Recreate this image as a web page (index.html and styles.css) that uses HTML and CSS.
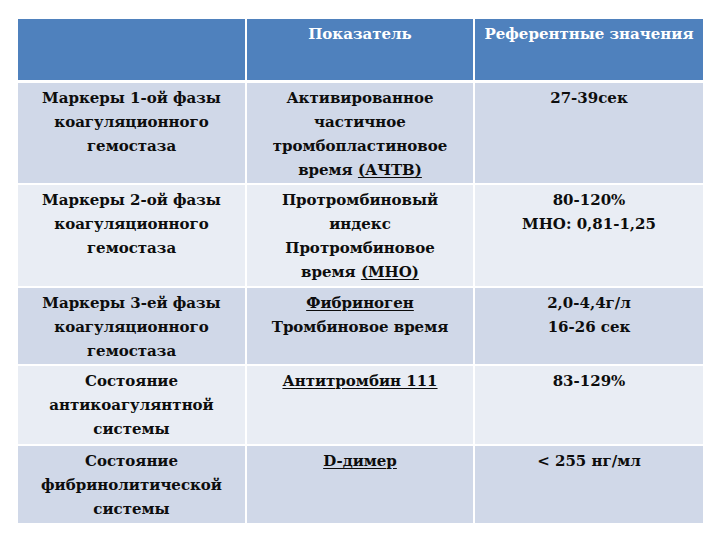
FILE: index.html
```html
<!DOCTYPE html>
<html lang="ru">
<head>
<meta charset="utf-8">
<link rel="stylesheet" href="styles.css">
</head>
<body>
<table class="grid">
  <colgroup><col class="c1"><col class="c2"><col class="c3"></colgroup>
  <tr class="head"><th></th><th>Показатель</th><th>Референтные значения</th></tr>
  <tr class="odd r1"><td>Маркеры 1-ой фазы<br>коагуляционного<br>гемостаза</td><td>Активированное<br>частичное<br>тромбопластиновое<br>время <u>(АЧТВ)</u></td><td>27-39сек</td></tr>
  <tr class="even r2"><td>Маркеры 2-ой фазы<br>коагуляционного<br>гемостаза</td><td>Протромбиновый<br>индекс<br>Протромбиновое<br>время <u>(МНО)</u></td><td>80-120%<br>МНО: 0,81-1,25</td></tr>
  <tr class="odd r3"><td>Маркеры 3-ей фазы<br>коагуляционного<br>гемостаза</td><td><u>Фибриноген</u><br>Тромбиновое время</td><td>2,0-4,4г/л<br>16-26 сек</td></tr>
  <tr class="even r4"><td>Состояние<br>антикоагулянтной<br>системы</td><td><u>Антитромбин 111</u></td><td>83-129%</td></tr>
  <tr class="odd r5"><td>Состояние<br>фибринолитической<br>системы</td><td><u>D-димер</u></td><td>&lt; 255 нг/мл</td></tr>
</table>
</body>
</html>
```
FILE: styles.css
```css
html, body { margin: 0; padding: 0; background: #ffffff; }
body {
  padding: 19px 0 0 18px;
  font-family: "DejaVu Serif", serif;
}
.grid {
  border-collapse: collapse;
  table-layout: fixed;
  width: 685px;
  font-family: "DejaVu Serif", serif;
  font-weight: 700;
  font-size: 15px;
  line-height: 24px;
  color: #0d0d0d;
}
.c1 { width: 228px; }
.c2 { width: 228px; }
.c3 { width: 229px; }
.grid th, .grid td {
  border: 2px solid #ffffff;
  padding: 3px 4px 0 4px;
  vertical-align: top;
  text-align: center;
}
.grid tr:first-child th { border-top: none; }
.grid tr th:first-child, .grid tr td:first-child { border-left: none; }
.grid tr th:last-child, .grid tr td:last-child { border-right: none; }
.grid tr:last-child td { border-bottom: none; }
.head th {
  background: #4f81bd;
  color: #ffffff;
  font-size: 15px;
  height: 58px;
  border-bottom-width: 3px;
}
.odd td { background: #d0d8e8; }
.even td { background: #e9edf4; }
.r1 td { height: 97px; }
.r2 td { height: 98px; }
.r3 td { height: 73px; }
.r4 td { height: 75px; }
.r5 td { height: 74px; }
u { text-decoration-thickness: 1px; text-underline-offset: 2px; }
```
